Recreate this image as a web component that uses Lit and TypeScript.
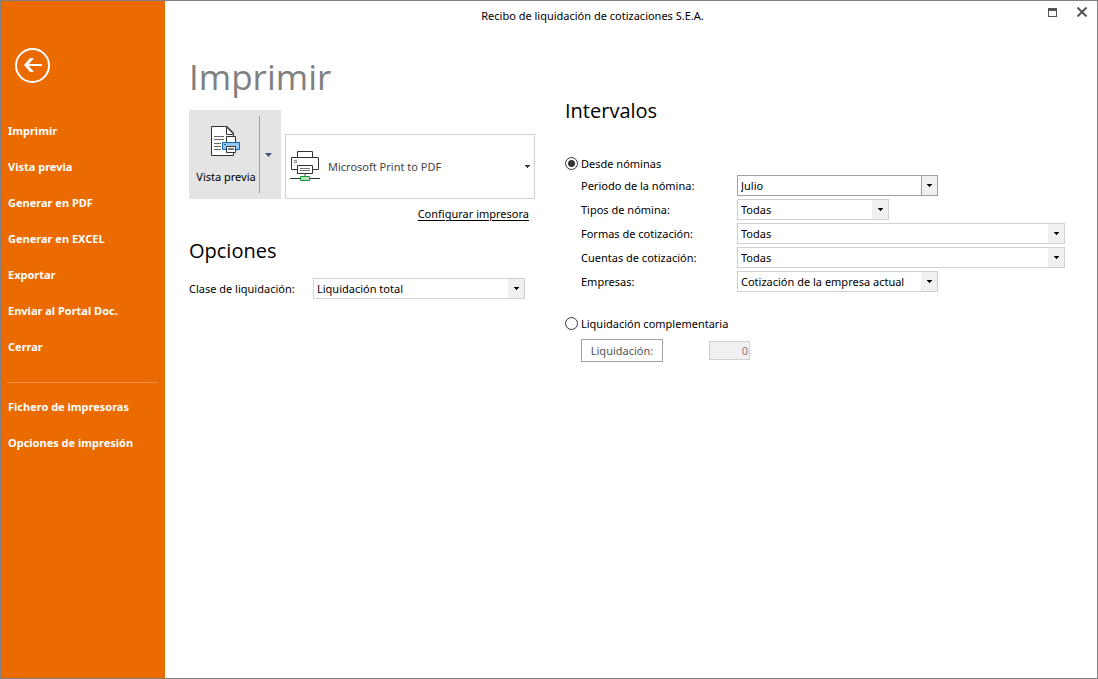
import { LitElement, html, css, svg } from "lit";
import { customElement, property, state } from "lit/decorators.js";

const FONT = css`"Noto Sans", "Open Sans", sans-serif`;

@customElement("combo-box")
class ComboBox extends LitElement {
  @property() label = "";
  @property() value = "";
  @property({ type: Number }) width = 0;
  @property({ type: Boolean }) strong = false;

  static styles = css`
    :host { display: flex; align-items: center; font: 11px/16px ${FONT}; color: #000; }
    label { flex: none; width: var(--label-width, 156px); }
    .box {
      box-sizing: border-box; flex: 0 1 auto; display: grid; grid-template-columns: 1fr 16px;
      height: 21px; border: 1px solid #d0d0d0; background: #fff;
    }
    select {
      grid-area: 1 / 1 / 2 / 3; appearance: none; border: 0; margin: 0; padding: 0 18px 0 3px;
      min-width: 0; background: transparent; font: inherit; color: inherit; outline-offset: 0;
    }
    .drop {
      grid-area: 1 / 2; pointer-events: none; background: #f0f0f0;
      display: flex; align-items: center; justify-content: center;
    }
    .strong { border-color: #a0a0a0; }
    .strong .drop { border-left: 1px solid #a0a0a0; }
  `;

  render() {
    return html`
      <label for="field">${this.label}</label>
      <div class="box ${this.strong ? "strong" : ""}" style="width:${this.width}px">
        <span class="drop">
          <svg width="5" height="3" shape-rendering="crispEdges"><path d="M0 0H5V1H4V2H3V3H2V2H1V1H0Z" /></svg>
        </span>
        <select id="field"><option>${this.value}</option></select>
      </div>
    `;
  }
}

const documentIcon = svg`
  <svg width="30" height="31" viewBox="0 0 30 31" fill="none" stroke-width="1">
    <path d="M.5 .5H15.5L22.5 7.5V29.5H.5Z" fill="#fff" stroke="#333" />
    <path d="M15.5 .5V8.5H22.5" stroke="#333" />
    <path d="M15.5 .5L22.5 7.5" stroke="#333" stroke-width="1.5" />
    <path d="M3 10.5H13M3 13.5H13M3 17.5H10M3 20.5H10M3 23.5H10" stroke="#666" />
    <path d="M15.5 10.5H24.5V17.5H15.5Z" fill="#fff" stroke="#333" />
    <path d="M11.5 16.5H28.5V23.5H11.5Z" fill="#92c8f0" stroke="#1468b0" />
    <path d="M13 18.5H15" stroke="#1468b0" />
    <path d="M15.5 20.5H24.5V26.5H15.5Z" fill="#fff" stroke="#333" />
    <path d="M17 22.5H23M17 23.5H23" stroke="#777" />
  </svg>`;

const printerIcon = svg`
  <svg width="30" height="31" viewBox="0 0 30 31" fill="none">
    <path d="M7.5 6.5V.5H22.5V6.5" fill="#fff" stroke="#333" />
    <path d="M1.5 6.5H28.5V18.5H1.5Z" fill="#fff" stroke="#333" />
    <path d="M4.5 9.5H6.5V11.5H4.5Z" stroke="#888" />
    <path d="M7.5 14.5H22.5V22.5H7.5Z" fill="#fff" stroke="#333" />
    <path d="M10 17.5H20M10 19.5H20" stroke="#777" />
    <path d="M15 23V25" stroke="#aaa" stroke-width="2" />
    <path d="M0 27.5H30" stroke="#333" />
    <path d="M10.5 25.5H19.5V29.5H10.5Z" fill="#b5dfbc" stroke="#0a9a3c" />
  </svg>`;

@customElement("app-root")
class AppRoot extends LitElement {
  @state() private mode = "nominas";

  static styles = css`
    :host {
      box-sizing: border-box; display: flex; min-height: 100vh; border: 1px solid #808080;
      background: #fff; color: #000; font: 11px/16px ${FONT};
    }
    button { font: inherit; color: inherit; border: 0; background: none; padding: 0; margin: 0; }
    h1, h2 { margin: 0; font-family: "Open Sans", sans-serif; font-weight: 400; }
    svg { display: block; }
    aside { flex: none; width: 164px; box-sizing: border-box; background: #eb6b00; color: #fff; padding: 47px 7px 0 6px; }
    .back { display: block; margin: 0 0 30px 8px; }
    nav { display: flex; flex-direction: column; }
    nav a { font-weight: 700; line-height: 36px; color: #fff; text-decoration: none; padding-left: 1px; white-space: nowrap; }
    hr { width: 150px; box-sizing: border-box; border: 0; border-top: 1px solid #f09048; margin: 17px 0 6px; }
    .page { flex: 1; min-width: 0; display: flex; flex-direction: column; }
    header { display: flex; align-items: center; height: 30px; }
    .caption { flex: 1; text-align: center; }
    .window { display: flex; align-items: center; gap: 20px; width: 77px; box-sizing: border-box; padding: 0 9px 8px 28px; }
    main { display: grid; grid-template-columns: 346px minmax(0, 1fr); column-gap: 30px; padding: 22px 32px 0 24px; }
    h1 { font-size: 35px; line-height: 48px; color: #808080; margin-bottom: 9px; }
    h2 { font-size: 20px; line-height: 28px; }
    .printing { display: flex; align-items: flex-end; gap: 4px; }
    .preview { display: flex; align-items: center; height: 89px; width: 92px; background: #e4e4e4; }
    .show { flex: 1; display: flex; flex-direction: column; align-items: center; gap: 12px; white-space: nowrap; padding: 2px 0 0 4px; }
    .more { width: 22px; height: 77px; box-sizing: border-box; border-left: 1px solid #a0a0a0; padding-right: 4px; display: flex; align-items: center; justify-content: center; }
    .printer { flex: 1; box-sizing: border-box; height: 65px; border: 1px solid #d0d0d0; display: grid; grid-template-columns: 38px 1fr 9px; align-items: center; padding: 0 0 0 4px; color: #444; }
    .printer select { grid-area: 1 / 2 / 2 / 4; align-self: stretch; appearance: none; border: 0; background: none; font: inherit; color: inherit; padding: 0; min-width: 0; }
    .printer .tip { grid-area: 1 / 3; pointer-events: none; }
    .setup { display: block; width: max-content; margin: 7px 6px 15px auto; color: #000; text-underline-offset: 2px; }
    .kind { margin-top: 13px; --label-width: 124px; }
    .ranges { padding-top: 44px; }
    .ranges h2 { margin-bottom: 29px; }
    .radio { display: flex; align-items: center; gap: 3px; height: 19px; }
    .radio input { appearance: none; box-sizing: border-box; width: 13px; height: 13px; margin: 0; border: 1px solid #333; border-radius: 50%; }
    .radio input:checked { background: radial-gradient(circle, #333 0 3px, #fff 4px); }
    .fields { display: flex; flex-direction: column; gap: 3px; padding: 2px 0 22px 16px; }
    .extra { display: flex; align-items: center; gap: 46px; padding: 6px 0 0 16px; }
    .settle { width: 82px; height: 23px; border: 1px solid #a0a0a0; color: #555; background: #fff; }
    .amount { box-sizing: border-box; width: 41px; height: 19px; border: 1px solid #d0d0d0; background: #f0f0f0; color: #808080; font: inherit; text-align: right; padding: 0 1px; }
  `;

  render() {
    const link = (text: string) => html`<a href="#">${text}</a>`;
    return html`
      <aside>
        <button class="back" aria-label="Volver">
          <svg width="35" height="35" viewBox="0 0 35 35" fill="none" stroke="#fff">
            <circle cx="17.5" cy="17.5" r="16.5" stroke-width="2" />
            <path d="M11 17H27" stroke-width="2" />
            <path d="M9 17L15 10H19L13 17L19 24H15Z" fill="#fff" stroke="none" />
          </svg>
        </button>
        <nav>
          ${["Imprimir", "Vista previa", "Generar en PDF", "Generar en EXCEL", "Exportar", "Enviar al Portal Doc.", "Cerrar"].map(link)}
          <hr />
          ${["Fichero de impresoras", "Opciones de impresión"].map(link)}
        </nav>
      </aside>
      <div class="page">
        <header>
          <span class="caption">Recibo de liquidación de cotizaciones S.E.A.</span>
          <div class="window">
            <button aria-label="Maximizar">
              <svg width="9" height="9" shape-rendering="crispEdges"><path fill="#555" fill-rule="evenodd" d="M0 0H9V9H0ZM1 3V8H8V3Z" /></svg>
            </button>
            <button aria-label="Cerrar ventana">
              <svg width="10" height="10" fill="none" stroke="#555" stroke-width="2"><path d="M.5 .5L9.500 9.500M9.500 .5L.5 9.500" /></svg>
            </button>
          </div>
        </header>
        <main>
          <section>
            <h1>Imprimir</h1>
            <div class="printing">
              <div class="preview">
                <button class="show">${documentIcon}<span>Vista previa</span></button>
                <button class="more" aria-label="Más opciones de vista previa">
                  <svg width="7" height="4"><path d="M0 0H7L3.500 4Z" fill="#44597f" /></svg>
                </button>
              </div>
              <div class="printer">
                ${printerIcon}
                <select aria-label="Impresora"><option>Microsoft Print to PDF</option></select>
                <svg class="tip" width="5" height="3" shape-rendering="crispEdges"><path d="M0 0H5V1H4V2H3V3H2V2H1V1H0Z" fill="#333" /></svg>
              </div>
            </div>
            <a class="setup" href="#">Configurar impresora</a>
            <h2>Opciones</h2>
            <combo-box class="kind" label="Clase de liquidación:" value="Liquidación total" width="212"></combo-box>
          </section>
          <section class="ranges">
            <h2>Intervalos</h2>
            <label class="radio">
              <input type="radio" name="mode" .checked=${this.mode === "nominas"} @change=${() => (this.mode = "nominas")} />
              Desde nóminas
            </label>
            <div class="fields">
              <combo-box label="Periodo de la nómina:" value="Julio" width="201" strong></combo-box>
              <combo-box label="Tipos de nómina:" value="Todas" width="152"></combo-box>
              <combo-box label="Formas de cotización:" value="Todas" width="328"></combo-box>
              <combo-box label="Cuentas de cotización:" value="Todas" width="328"></combo-box>
              <combo-box label="Empresas:" value="Cotización de la empresa actual" width="201"></combo-box>
            </div>
            <label class="radio">
              <input type="radio" name="mode" .checked=${this.mode === "complementaria"} @change=${() => (this.mode = "complementaria")} />
              Liquidación complementaria
            </label>
            <div class="extra">
              <button class="settle" disabled>Liquidación:</button>
              <input class="amount" aria-label="Número de liquidación" value="0" disabled />
            </div>
          </section>
        </main>
      </div>
    `;
  }
}
